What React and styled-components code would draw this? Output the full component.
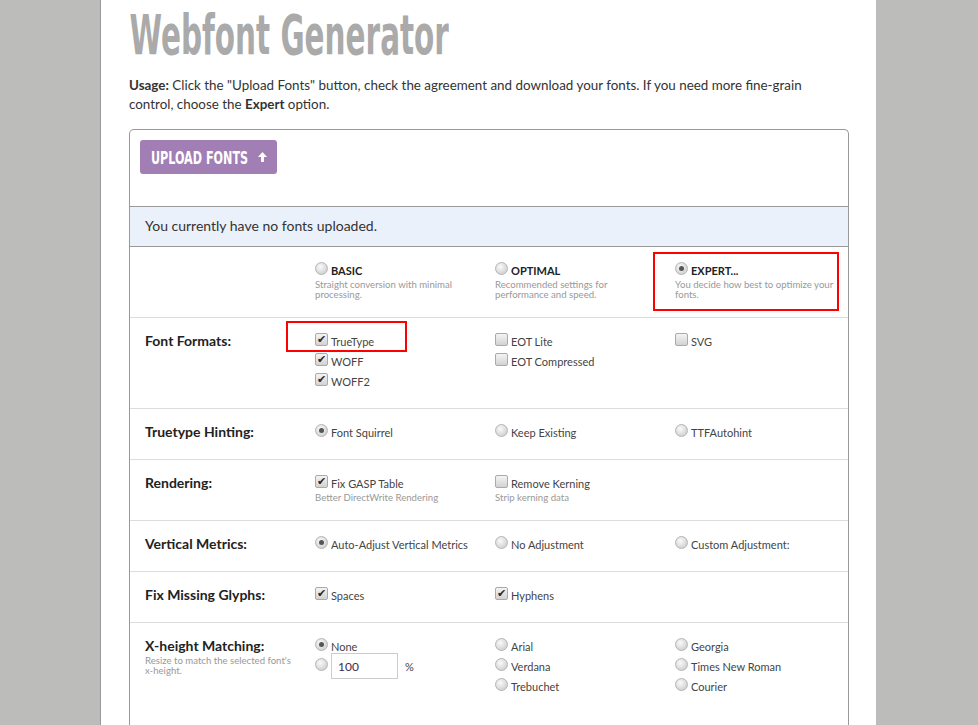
import styled, { createGlobalStyle } from "styled-components";

const GlobalStyle = createGlobalStyle`
  html, body {
    margin: 0;
    padding: 0;
    background: #bcbcbb;
  }
  body {
    font-family: Lato, "Open Sans", Arial, sans-serif;
    color: #333;
  }
`;

// no condensed face is installed, so the display text is squeezed horizontally
const condensed = `"Liberation Sans Narrow", "DejaVu Sans Condensed", "Liberation Sans", Arial, sans-serif`;

const Page = styled.div`
  margin-left: 100px;
  width: 776px;
  box-sizing: border-box;
  min-height: 725px;
  background: #fff;
  border-left: 1px solid #9a9a9a;
  padding: 0 27px 0 28px;
`;

const Title = styled.h1`
  margin: 0;
  padding-top: 6px;
  font-family: ${condensed};
  font-weight: 700;
  font-size: 56px;
  line-height: 58px;
  color: #aaa;
  white-space: nowrap;
  transform: scaleX(0.585);
  transform-origin: left center;
  padding-left: 1px;
`;

const Usage = styled.p`
  margin: 12px 0 0;
  font-size: 13.4px;
  line-height: 18.5px;
  color: #333;

  b {
    font-weight: 700;
  }
`;

const Panel = styled.div`
  position: relative;
  margin-top: 16px;
  border: 1px solid #999;
  border-bottom: none;
  border-radius: 5px 5px 0 0;
  min-height: 600px;
`;

const Header = styled.div`
  padding: 10px 10px 32px;
`;

const UploadButton = styled.button`
  display: flex;
  align-items: center;
  width: 137px;
  height: 34px;
  padding: 0 0 0 11px;
  border: none;
  border-radius: 3px;
  background: #a17fb4;
  color: #fff;
  font-family: ${condensed};
  font-weight: 700;
  font-size: 18px;
  cursor: pointer;
`;

const ButtonLabel = styled.span`
  display: block;
  width: 97px;
  margin-right: 9px;
  white-space: nowrap;
  text-align: left;
  transform: scaleX(0.69);
  transform-origin: left center;
`;

const Notice = styled.div`
  height: 41px;
  box-sizing: border-box;
  display: flex;
  align-items: center;
  padding: 0 15px 3px;
  background: #ebf1fb;
  border-top: 1px solid #999;
  border-bottom: 1px solid #999;
  font-size: 14px;
  color: #333;
`;

const Row = styled.div`
  display: grid;
  grid-template-columns: 170px 180px 180px 1fr;
  padding: ${(p) => p.$pad || "13px 0 15px 15px"};
  border-bottom: ${(p) => (p.$last ? "none" : "1px solid #ddd")};
  min-height: ${(p) => p.$min || "auto"};
  box-sizing: border-box;
`;

const Label = styled.div`
  font-size: 14px;
  font-weight: 700;
  line-height: 20px;
  color: #222;
`;

const LabelNote = styled.div`
  font-size: 9.6px;
  font-weight: 400;
  line-height: 10px;
  color: #999;
  width: 150px;
`;

const Col = styled.div`
  display: flex;
  flex-direction: column;
`;

const Option = styled.label`
  display: flex;
  align-items: center;
  gap: 3px;
  height: ${(p) => p.$h || 20}px;
  margin-top: ${(p) => p.$mt || 0}px;
  font-size: 11px;
  color: #444;
`;

const ModeTitle = styled.span`
  font-size: 11px;
  font-weight: 700;
  color: #222;
  text-transform: uppercase;
`;

const Desc = styled.div`
  font-size: 9.6px;
  line-height: 10px;
  color: #999;
  width: 162px;
`;

const Radio = styled.span`
  flex: none;
  width: 11px;
  height: 11px;
  border-radius: 50%;
  border: 1px solid #b5b5b5;
  background: radial-gradient(circle at 40% 35%, #fafafa 0%, #dadada 60%, #c6c6c6 100%);
  position: relative;
  top: -2px;

  &::after {
    content: "";
    display: ${(p) => (p.$on ? "block" : "none")};
    position: absolute;
    left: 3px;
    top: 3px;
    width: 5px;
    height: 5px;
    border-radius: 50%;
    background: #555;
  }
`;

const Check = styled.span`
  flex: none;
  width: 11px;
  height: 11px;
  border-radius: 2px;
  border: 1px solid #aaa;
  background: linear-gradient(#f4f4f4, #d2d2d2);
  position: relative;
  top: -2px;
  display: flex;
  align-items: center;
  justify-content: center;
  font-size: 11px;
  line-height: 1;
  color: #2a2a2a;
  font-family: "DejaVu Sans", sans-serif;
`;

const NumberInput = styled.input`
  width: 67px;
  height: 26px;
  box-sizing: border-box;
  border: 1px solid #ccc;
  margin: 0 4px 0 0;
  padding: 0 6px;
  font-family: Lato, sans-serif;
  font-size: 12px;
  color: #402a50;
`;

const Highlight = styled.div`
  position: absolute;
  left: ${(p) => p.$x}px;
  top: ${(p) => p.$y}px;
  width: ${(p) => p.$w}px;
  height: ${(p) => p.$h}px;
  border: 2px solid #f00;
  box-sizing: border-box;
  pointer-events: none;
`;

const Spacer = styled.div``;

const RadioOpt = ({ on, children }) => (
  <Option>
    <Radio $on={on} />
    {children}
  </Option>
);

const CheckOpt = ({ on, children }) => (
  <Option>
    <Check>{on ? "✔" : ""}</Check>
    {children}
  </Option>
);

const ModeOpt = ({ on, title, desc }) => (
  <Col>
    <Option>
      <Radio $on={on} />
      <ModeTitle>{title}</ModeTitle>
    </Option>
    <Desc>{desc}</Desc>
  </Col>
);

const ArrowUp = () => (
  <svg width="11" height="12" viewBox="0 0 11 12">
    <path d="M5.5 1 L10 6 H7 V11 H4 V6 H1 Z" fill="#fff" />
  </svg>
);

export default function App() {
  return (
    <>
      <GlobalStyle />
      <Page>
        <Title>Webfont Generator</Title>
        <Usage>
          <b>Usage:</b> Click the "Upload Fonts" button, check the agreement and
          download your fonts. If you need more fine-grain control, choose the{" "}
          <b>Expert</b> option.
        </Usage>
        <Panel>
          <Header>
            <UploadButton>
              <ButtonLabel>UPLOAD FONTS</ButtonLabel>
              <ArrowUp />
            </UploadButton>
          </Header>
          <Notice>You currently have no fonts uploaded.</Notice>

          <Row $pad="13px 0 14px 15px" $min="71px">
            <Spacer />
            <ModeOpt
              title="Basic"
              desc="Straight conversion with minimal processing."
            />
            <ModeOpt
              title="Optimal"
              desc="Recommended settings for performance and speed."
            />
            <ModeOpt
              on
              title="Expert..."
              desc="You decide how best to optimize your fonts."
            />
          </Row>

          <Row $min="91px">
            <Label>Font Formats:</Label>
            <Col>
              <CheckOpt on>TrueType</CheckOpt>
              <CheckOpt on>WOFF</CheckOpt>
              <CheckOpt on>WOFF2</CheckOpt>
            </Col>
            <Col>
              <CheckOpt>EOT Lite</CheckOpt>
              <CheckOpt>EOT Compressed</CheckOpt>
            </Col>
            <Col>
              <CheckOpt>SVG</CheckOpt>
            </Col>
          </Row>

          <Row $min="51px">
            <Label>Truetype Hinting:</Label>
            <RadioOpt on>Font Squirrel</RadioOpt>
            <RadioOpt>Keep Existing</RadioOpt>
            <RadioOpt>TTFAutohint</RadioOpt>
          </Row>

          <Row $min="61px">
            <Label>Rendering:</Label>
            <Col>
              <CheckOpt on>Fix GASP Table</CheckOpt>
              <Desc>Better DirectWrite Rendering</Desc>
            </Col>
            <Col>
              <CheckOpt>Remove Kerning</CheckOpt>
              <Desc>Strip kerning data</Desc>
            </Col>
          </Row>

          <Row $min="51px">
            <Label>Vertical Metrics:</Label>
            <RadioOpt on>Auto-Adjust Vertical Metrics</RadioOpt>
            <RadioOpt>No Adjustment</RadioOpt>
            <RadioOpt>Custom Adjustment:</RadioOpt>
          </Row>

          <Row $min="51px">
            <Label>Fix Missing Glyphs:</Label>
            <CheckOpt on>Spaces</CheckOpt>
            <CheckOpt on>Hyphens</CheckOpt>
          </Row>

          <Row $min="100px" $last>
            <Col>
              <Label>X-height Matching:</Label>
              <LabelNote>Resize to match the selected font's x-height.</LabelNote>
            </Col>
            <Col>
              <RadioOpt on>None</RadioOpt>
              <Option $h={26} $mt={-3}>
                <Radio />
                <NumberInput defaultValue="100" />%
              </Option>
            </Col>
            <Col>
              <RadioOpt>Arial</RadioOpt>
              <RadioOpt>Verdana</RadioOpt>
              <RadioOpt>Trebuchet</RadioOpt>
            </Col>
            <Col>
              <RadioOpt>Georgia</RadioOpt>
              <RadioOpt>Times New Roman</RadioOpt>
              <RadioOpt>Courier</RadioOpt>
            </Col>
          </Row>

          <Highlight $x={523} $y={122} $w={186} $h={59} />
          <Highlight $x={156} $y={191} $w={121} $h={31} />
        </Panel>
      </Page>
    </>
  );
}
